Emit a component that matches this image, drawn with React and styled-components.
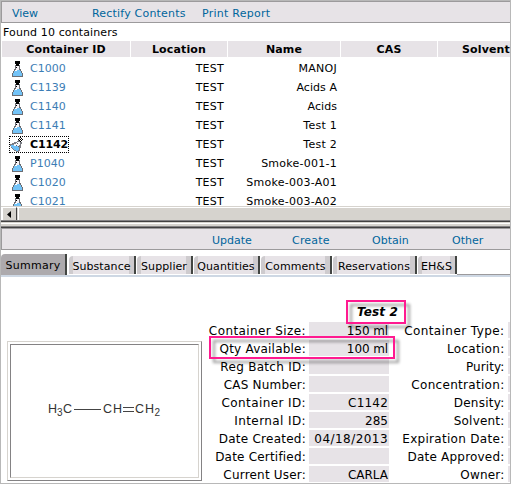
import React from "react";
import styled, { createGlobalStyle, css } from "styled-components";

const Global = createGlobalStyle`
  * { box-sizing: border-box; }
  body { margin: 0; background: #fff; }
`;

const Page = styled.div`
  width: 511px;
  height: 484px;
  overflow: hidden;
  border: 1px solid #b8b8b8;
  background: #fff;
  color: #000;
  font: 11px/14px "DejaVu Sans", sans-serif;
  white-space: nowrap;
  display: flex;
  flex-direction: column;
`;

const ListPane = styled.section`
  height: 205px;
  flex: none;
  overflow: hidden;
`;

const Toolbar = styled.nav`
  height: 22px;
  padding-top: 3px;
  display: flex;
  align-items: center;
  background: #e7e3e7;
  border: 1px solid #9c9a9c;
  border-right: 0;
`;

const MenuLink = styled.a`
  flex: none;
  width: ${(p) => p.$w}px;
  margin-left: ${(p) => p.$gap}px;
  letter-spacing: ${(p) => p.$ls || 0}px;
  color: #00659c;
`;

const Found = styled.div`
  height: 18px;
  padding: 3px 0 0 2px;
  letter-spacing: 0.12px;
`;

const Grid = styled.div`
  display: grid;
  grid-template-columns: 128px 96px 112px 96px 96px;
  column-gap: 1px;
  padding-left: 1px;
`;

const HeadCell = styled.div`
  height: 16px;
  line-height: 17px;
  margin-bottom: 2px;
  background: #e7e3e7;
  text-align: center;
  font-weight: bold;
  letter-spacing: 0.15px;
`;

const IdCell = styled.div`
  height: 19px;
  padding: 1px 0 0 7px;
`;

const IdLink = styled.a`
  display: inline-flex;
  align-items: center;
  height: 17px;
  padding-left: 2px;
  gap: 6px;
  color: #3c7db5;
  ${(p) =>
    p.$selected &&
    css`
      width: 60px;
      padding-left: 1px;
      outline: 1px dotted #000;
      outline-offset: -1px;
      color: #000;
      font-weight: bold;
      letter-spacing: -0.15px;
    `}
`;

const Cell = styled.div`
  height: 19px;
  line-height: 19px;
  padding-right: 3px;
  text-align: right;
  letter-spacing: ${(p) => p.$ls ?? 0.25}px;
`;

const Scrollbar = styled.div`
  flex: none;
  height: 15px;
  display: flex;
  background: #d6d3ce;
  border-top: 1px solid #d6d3ce;
  border-bottom: 1px solid #848284;
  box-shadow: inset 0 1px #fff;
`;

const ArrowButton = styled.button`
  width: 16px;
  height: 13px;
  padding: 0 0 0 4px;
  display: flex;
  align-items: center;
  background: #d6d3ce;
  border: 0;
  border-left: 2px solid #fff;
  border-top: 1px solid #fff;
  border-right: 1px solid #424142;
`;

const Thumb = styled.div`
  flex: 1;
  margin-left: 1px;
  border-left: 1px solid #fff;
`;

const Splitter = styled.div`
  flex: none;
  height: 6px;
  background: #d6d3ce;
  border-top: 1px solid #424142;
  border-bottom: 1px solid #848284;
  box-shadow: inset 0 1px #d6d3ce, inset 0 2px #fff;
`;

const DetailPane = styled.section`
  flex: 1;
  border-top: 1px solid #424142;
`;

const Tabs = styled.div`
  display: flex;
  align-items: flex-end;
  height: 27px;
  border-bottom: 2px solid #ced8e4;
`;

const Tab = styled.div`
  flex: none;
  width: ${(p) => p.$w}px;
  height: ${(p) => (p.$active ? 21 : 18)}px;
  margin-bottom: ${(p) => (p.$active ? 0 : 1)}px;
  line-height: ${(p) => (p.$active ? 24 : 22)}px;
  text-align: center;
  letter-spacing: ${(p) => (p.$active ? 0.25 : 0.08)}px;
  background: ${(p) =>
    p.$active
      ? "#adaaad"
      : "linear-gradient(90deg, #cecbce 4px, #e7e3e7 4px, #e7e3e7 calc(100% - 5px), #cecbce calc(100% - 5px))"};
  border-right: 2px solid #424542;
  border-radius: 4px 0 0 0;
  margin-right: ${(p) => (p.$active ? 2 : 1)}px;
`;

const TabLine = styled.div`
  flex: 1;
  height: 1px;
  margin-left: -1px;
  background: #9c9a9c;
`;

const Details = styled.div`
  position: relative;
  display: flex;
  height: 206px;
`;

const Structure = styled.div`
  flex: none;
  width: 195px;
  height: 140px;
  margin: 64px 0 0 6px;
  padding: 2px;
  border: 1px solid;
  border-color: #d6d3ce #848284 #848284 #d6d3ce;
`;

const StructureInner = styled.div`
  width: 100%;
  height: 100%;
  border: 1px solid;
  border-color: #848284 #d6d3ce #d6d3ce #848284;
`;

const Fields = styled.div`
  flex: none;
  width: 308px;
  padding-top: 26px;
`;

const Title = styled.h1`
  margin: 0;
  height: 19px;
  padding-left: 155px;
  font: italic bold 12px/19px "DejaVu Sans", sans-serif;
  letter-spacing: 0.15px;
`;

const FieldRow = styled.div`
  display: grid;
  grid-template-columns: 104px 80px 115px 10px;
  height: 16px;
  margin-bottom: 2px;
  font-size: 12px;
  line-height: 19px;
`;

const Label = styled.div`
  height: 16px;
  display: flex;
  justify-content: flex-end;
  letter-spacing: ${(p) => p.$ls || 0}px;
`;

const Value = styled.div`
  height: 16px;
  width: 80px;
  margin-left: 3px;
  padding-right: 1px;
  background: #e7e3e7;
  display: flex;
  justify-content: flex-end;
  letter-spacing: ${(p) => p.$ls || 0}px;
`;

const SideLabel = styled(Label)`
  margin-right: -3.5px;
`;

const SideValue = styled(Value)`
  width: 10px;
  margin-left: 7px;
`;

const Highlight = styled.div`
  position: absolute;
  left: ${(p) => p.$x}px;
  top: ${(p) => p.$y}px;
  width: ${(p) => p.$w}px;
  height: ${(p) => p.$h}px;
  border: 2px solid #ff1a90;
  filter: drop-shadow(4px 4px 1.5px rgba(0, 0, 0, 0.4));
`;

const Flask = () => (
  <svg width="13" height="16" viewBox="0 0 13 16" shapeRendering="crispEdges">
    <path d="M4 4h5v4h1v2h1v2h1v4H1v-4h1v-2h1V8h1z" fill="#6b6d73" />
    <path d="M5 5h3v4H5z" fill="#f7f3f7" />
    <path d="M4 9h5v1h1v2h1v3H2v-3h1v-2h1z" fill="#73c3f7" />
    <path d="M4 9h2v1H4z" fill="#fff" />
    <path d="M4 0h5v3H8v2H5V3H4z" fill="#000" />
    <path d="M5 6h1v1H5z" fill="#000" />
  </svg>
);

const TippedFlask = () => (
  <svg width="14" height="16" viewBox="0 0 14 16" shapeRendering="crispEdges">
    <path d="M8 3h2v1h1v1h1v2h-1v4h-1v3H9v1H6v-1H4v-1H3v-1H2v-1H1V9H0V7h2V6h2V5h3V4h1z" fill="#7b7d84" />
    <path d="M7 5h3v3H9v3H8v2H4v-2H3V9H2V8h2V7h2V6h1z" fill="#f4f6fa" />
    <path d="M1 8h3v1h5v4H8v1H6v-1H4v-1H3v-1H2v-1H1z" fill="#6bbef7" />
    <path d="M6 8h1v1H6zM7 6h1v1H7zM8 9h1v1H8z" fill="#636163" />
    <path d="M10 0h1v1h-1zM9 1h1v1H9zM11 1h1v1h-1zM8 2h1v1H8zM10 2h1v1h-1zM12 2h1v1h-1zM9 3h1v1H9zM11 3h1v1h-1zM10 4h1v1h-1z" fill="#000" />
  </svg>
);

const columns = ["Container ID", "Location", "Name", "CAS", "Solvent"];
const containers = [
  ["C1000", "MANOJ"],
  ["C1139", "Acids A", 0.05],
  ["C1140", "Acids", 0.05],
  ["C1141", "Test 1"],
  ["C1142", "Test 2"],
  ["P1040", "Smoke-001-1"],
  ["C1020", "Smoke-003-A01"],
  ["C1021", "Smoke-003-A02"],
];
const tabs = [
  ["Summary", 66],
  ["Substance", 67],
  ["Supplier", 56],
  ["Quantities", 66],
  ["Comments", 71],
  ["Reservations", 84],
  ["EH&S", 39],
];
// Each text is followed by its tracking in pixels.
const fields = [
  ["Container Size:", 0.4, "150 ml", -0.1, "Container Type:", 0.42],
  ["Qty Available:", 0.22, "100 ml", -0.1, "Location:", 0.3],
  ["Reg Batch ID:", 0.3, "", 0, "Purity:", 0.1],
  ["CAS Number:", 0.2, "", 0, "Concentration:", 0.3],
  ["Container ID:", 0.4, "C1142", 0.2, "Density:", 0.25],
  ["Internal ID:", 0.4, "285", 0, "Solvent:", 0.2],
  ["Date Created:", 0.25, "04/18/2013", 0.45, "Expiration Date:", 0.3],
  ["Date Certified:", 0.2, "", 0, "Date Approved:", 0.2],
  ["Current User:", 0.2, "CARLA", 0, "Owner:", 0.2],
];

export default function App() {
  return (
    <Page>
      <Global />
      <ListPane>
        <Toolbar>
          <MenuLink $w={26} $gap={10}>View</MenuLink>
          <MenuLink $w={94} $gap={54} $ls={0.2}>Rectify Contents</MenuLink>
          <MenuLink $w={70} $gap={16} $ls={0.25}>Print Report</MenuLink>
        </Toolbar>
        <Found>Found 10 containers</Found>
        <Grid>
          {columns.map((c) => (
            <HeadCell key={c}>{c}</HeadCell>
          ))}
          {containers.map(([id, name, ls]) => (
            <React.Fragment key={id}>
              <IdCell>
                <IdLink $selected={id === "C1142"}>
                  {id === "C1142" ? <TippedFlask /> : <Flask />}
                  {id}
                </IdLink>
              </IdCell>
              <Cell>TEST</Cell>
              <Cell $ls={ls}>{name}</Cell>
              <Cell />
              <Cell />
            </React.Fragment>
          ))}
        </Grid>
      </ListPane>
      <Scrollbar>
        <ArrowButton>
          <svg width="4" height="7" viewBox="0 0 4 7">
            <path d="M4 0v7L0 3.5z" />
          </svg>
        </ArrowButton>
        <Thumb />
      </Scrollbar>
      <Splitter />
      <DetailPane>
        <Toolbar>
          <MenuLink $w={40} $gap={210}>Update</MenuLink>
          <MenuLink $w={40} $gap={40} $ls={0.2}>Create</MenuLink>
          <MenuLink $w={38} $gap={40}>Obtain</MenuLink>
          <MenuLink $w={34} $gap={42}>Other</MenuLink>
        </Toolbar>
        <Tabs>
          {tabs.map(([name, w], i) => (
            <Tab key={name} $w={w} $active={i === 0}>{name}</Tab>
          ))}
          <TabLine />
        </Tabs>
        <Details>
          <Structure>
            <StructureInner>
              <svg width="189" height="134" viewBox="0 0 189 134" fontFamily="Liberation Sans, Arial, sans-serif" fontSize="12.5" fill="#333">
                <text x="37" y="67.5" textLength="9.5">H</text>
                <text x="46" y="71" fontSize="10">3</text>
                <text x="52" y="67.5">C</text>
                <path d="M63 64.5h27M112 62.5h11M112 66.5h11" stroke="#444" />
                <text x="92" y="67.5" textLength="19">CH</text>
                <text x="124" y="67.5" textLength="19">CH</text>
                <text x="143.5" y="71" fontSize="10">2</text>
              </svg>
            </StructureInner>
          </Structure>
          <Fields>
            <Title>Test 2</Title>
            {fields.map(([a, als, v, vls, b, bls]) => (
              <FieldRow key={a}>
                <Label $ls={als}>{a}</Label>
                <Value $ls={vls}>{v}</Value>
                <SideLabel $ls={bls}>{b}</SideLabel>
                <SideValue />
              </FieldRow>
            ))}
          </Fields>
          <Highlight $x={345} $y={23} $w={60} $h={24} />
          <Highlight $x={208} $y={59} $w={186} $h={23} />
        </Details>
      </DetailPane>
    </Page>
  );
}
